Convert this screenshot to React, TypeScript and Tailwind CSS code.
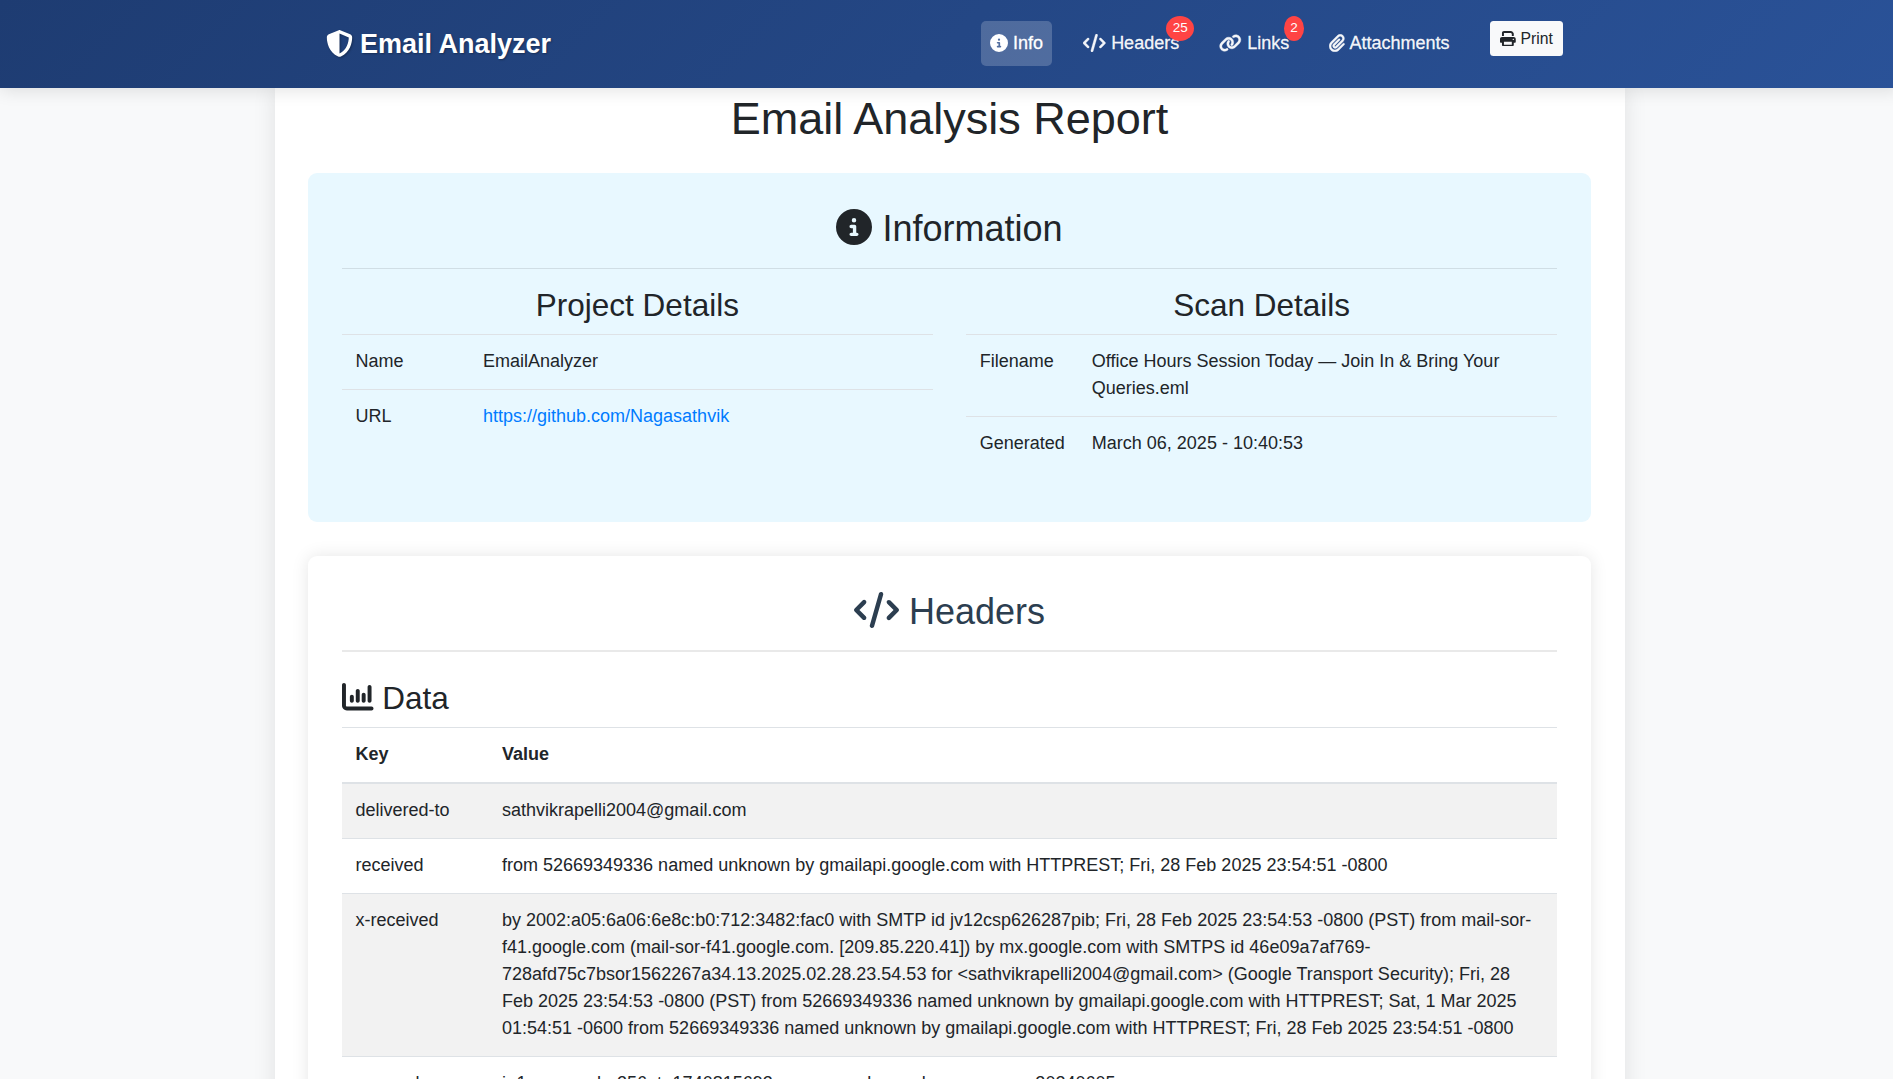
import React from "react";
import type { ReactNode } from "react";
import {
  FaChartColumn,
  FaCircleInfo,
  FaCode,
  FaLink,
  FaPaperclip,
  FaPrint,
  FaShieldHalved,
} from "react-icons/fa6";

const headerRows = [
  { key: "delivered-to", value: "sathvikrapelli2004@gmail.com" },
  {
    key: "received",
    value:
      "from 52669349336 named unknown by gmailapi.google.com with HTTPREST; Fri, 28 Feb 2025 23:54:51 -0800",
  },
  {
    key: "x-received",
    value:
      "by 2002:a05:6a06:6e8c:b0:712:3482:fac0 with SMTP id jv12csp626287pib; Fri, 28 Feb 2025 23:54:53 -0800 (PST) from mail-sor-f41.google.com (mail-sor-f41.google.com. [209.85.220.41]) by mx.google.com with SMTPS id 46e09a7af769-728afd75c7bsor1562267a34.13.2025.02.28.23.54.53 for <sathvikrapelli2004@gmail.com> (Google Transport Security); Fri, 28 Feb 2025 23:54:53 -0800 (PST) from 52669349336 named unknown by gmailapi.google.com with HTTPREST; Sat, 1 Mar 2025 01:54:51 -0600 from 52669349336 named unknown by gmailapi.google.com with HTTPREST; Fri, 28 Feb 2025 23:54:51 -0800",
  },
  {
    key: "arc-seal",
    value: "i=1; a=rsa-sha256; t=1740815693; cv=none; d=google.com; s=arc-20240605;",
  },
];

function NavItem({
  icon,
  label,
  badge,
  active,
}: {
  icon: ReactNode;
  label: string;
  badge?: string;
  active?: boolean;
}) {
  return (
    <a
      className={`relative flex h-[45px] items-center gap-[5px] rounded-[5px] px-[9px] [-webkit-text-stroke:0.3px_currentColor] ${
        active ? "bg-white/20 text-white" : "text-white/95"
      }`}
    >
      {icon}
      <span>{label}</span>
      {badge && (
        <span className="absolute -top-[5px] -right-[6px] flex h-[25px] items-start justify-center rounded-[50%] bg-[#ff4444] px-[6.5px] pt-[1px] text-[13.5px] leading-[21px] text-white [-webkit-text-stroke:0]">
          {badge}
        </span>
      )}
    </a>
  );
}

function DetailRow({ label, labelWidth, children }: { label: string; labelWidth: string; children: ReactNode }) {
  return (
    <tr className="border-t border-[#dee2e6] align-top">
      <td className={`px-[13.5px] pt-[13px] pb-[14px] ${labelWidth}`}>{label}</td>
      <td className="px-[13.5px] pt-[13px] pb-[14px]">{children}</td>
    </tr>
  );
}

export default function App() {
  return (
    <div className="h-[1079px] overflow-hidden bg-[#f8f9fa] font-['Liberation_Sans',Arial,sans-serif] text-[18px] leading-[27px] text-[#212529]">
      <div className="w-[1900px]">
        <nav className="relative z-10 h-[88px] bg-[linear-gradient(135deg,#1e3c72,#2a5298)] shadow-[0_2px_17px_rgba(0,0,0,0.12)]">
          <div className="mx-auto flex h-full w-[1250px] items-start text-white">
            <div className="mr-auto ml-[0.5px] flex items-center pt-[24px] text-[27px] leading-[41px] font-bold [text-shadow:1px_1px_2px_rgba(0,0,0,0.3)]">
              <FaShieldHalved className="-mt-[2px] mr-[7.5px] size-[27px] drop-shadow-[1px_1px_1px_rgba(0,0,0,0.3)]" />
              Email Analyzer
            </div>
            <div className="flex items-start gap-[22.5px] pt-[21px]">
              <NavItem active label="Info" icon={<FaCircleInfo className="-mt-[1px] size-[18px]" />} />
              <NavItem
                label="Headers"
                badge="25"
                icon={<FaCode className="-mt-[1px] -ml-[0.5px] mr-[0.5px] h-[18px] w-[22.5px] stroke-current [stroke-width:10]" />}
              />
              <NavItem
                label="Links"
                badge="2"
                icon={<FaLink className="-mt-[1px] -ml-[0.5px] mr-[0.5px] h-[18px] w-[22.5px] stroke-current [stroke-width:10]" />}
              />
              <NavItem
                label="Attachments"
                icon={<FaPaperclip className="-mt-[1px] -ml-[0.5px] -mr-[0.5px] h-[18px] w-[15.75px] stroke-current [stroke-width:10]" />}
              />
            </div>
            <button className="mt-[21px] mr-[12px] ml-[31.5px] flex h-[35px] w-[73px] items-center justify-center gap-[4.5px] rounded-[3.5px] bg-[#f8f9fa] text-[15.75px] leading-[23.6px] text-[#212529]">
              <FaPrint className="size-[15.75px]" />
              Print
            </button>
          </div>
        </nav>

        <main className="mx-auto h-[1100px] w-[1350px] bg-white pt-[4px] pr-[34px] pl-[33px] shadow-[0_0_22px_rgba(0,0,0,0.1)]">
          <h1 className="text-center text-[45px] leading-[54px]">Email Analysis Report</h1>

          <section className="mt-[27px] h-[349px] rounded-[9px] bg-[#e8f8ff] pt-[34px] pr-[34px] pl-[34px]">
            <h2 className="text-center text-[36px] leading-[43px]">
              <FaCircleInfo className="inline size-[36px] align-[-0.11em]" /> Information
            </h2>
            <hr className="mt-[18px] border-t border-black/10" />
            <div className="mt-[17px] flex gap-[33.5px]">
              <div className="flex-1">
                <h3 className="mb-[9px] text-center text-[31.5px] leading-[39px]">Project Details</h3>
                <table className="w-full">
                  <tbody>
                    <DetailRow label="Name" labelWidth="w-[127.5px]">
                      EmailAnalyzer
                    </DetailRow>
                    <DetailRow label="URL" labelWidth="w-[127.5px]">
                      <a className="text-[#007bff]">https://github.com/Nagasathvik</a>
                    </DetailRow>
                  </tbody>
                </table>
              </div>
              <div className="flex-1">
                <h3 className="mb-[9px] text-center text-[31.5px] leading-[39px]">Scan Details</h3>
                <table className="w-full">
                  <tbody>
                    <DetailRow label="Filename" labelWidth="w-[112px]">
                      Office Hours Session Today — Join In &amp; Bring Your Queries.eml
                    </DetailRow>
                    <DetailRow label="Generated" labelWidth="w-[112px]">
                      March 06, 2025 - 10:40:53
                    </DetailRow>
                  </tbody>
                </table>
              </div>
            </div>
          </section>

          <section className="mt-[34px] h-[700px] rounded-[9px] bg-white px-[34px] pt-[34px] shadow-[0_0_17px_rgba(0,0,0,0.1)]">
            <h2 className="border-b-2 border-[#e9e9e9] pb-[17px] text-center text-[36px] leading-[43px] text-[#2c3e50]">
              <FaCode className="inline h-[36px] w-[45px] align-[-0.11em]" /> Headers
            </h2>
            <h3 className="mt-[27px] mb-[10px] text-[31.5px] leading-[38px]">
              <FaChartColumn className="inline size-[31.5px] align-[-0.125em]" /> Data
            </h3>
            <table className="w-full table-fixed">
              <thead>
                <tr className="border-t border-b-2 border-[#dee2e6] text-left">
                  <th className="w-[146.5px] px-[13.5px] pt-[12.5px] pb-[14.5px]">Key</th>
                  <th className="px-[13.5px] pt-[12.5px] pb-[14.5px]">Value</th>
                </tr>
              </thead>
              <tbody>
                {headerRows.map((row) => (
                  <tr key={row.key} className="border-b border-[#dee2e6] align-top odd:bg-[#f2f2f2]">
                    <td className="px-[13.5px] pt-[13px] pb-[14px]">{row.key}</td>
                    <td className="px-[13.5px] pt-[13px] pb-[14px]">{row.value}</td>
                  </tr>
                ))}
              </tbody>
            </table>
          </section>
        </main>
      </div>
    </div>
  );
}
